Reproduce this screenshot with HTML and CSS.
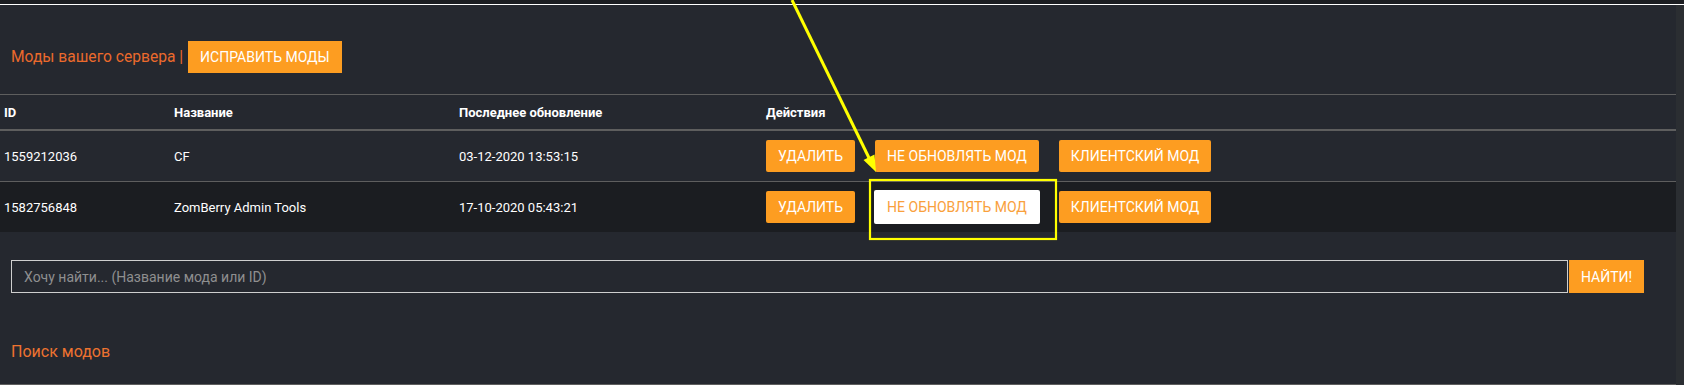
FILE: index.html
```html
<!DOCTYPE html>
<html lang="ru">
<head>
<meta charset="utf-8">
<title>Моды сервера</title>
<link rel="stylesheet" href="styles.css">
</head>
<body>
<div class="topbar"></div>
<div class="layout">
  <main class="main">
    <div class="title-row">
      <h2 class="title">Моды вашего сервера |</h2>
      <button class="btn btn-square">Исправить моды</button>
    </div>

    <div class="table">
      <div class="row head">
        <div>ID</div>
        <div>Название</div>
        <div>Последнее обновление</div>
        <div>Действия</div>
      </div>
      <div class="row">
        <div>1559212036</div>
        <div>CF</div>
        <div>03-12-2020 13:53:15</div>
        <div class="actions">
          <button class="btn">Удалить</button>
          <button class="btn">Не обновлять мод</button>
          <button class="btn">Клиентский мод</button>
        </div>
      </div>
      <div class="row dark">
        <div>1582756848</div>
        <div>ZomBerry Admin Tools</div>
        <div>17-10-2020 05:43:21</div>
        <div class="actions">
          <button class="btn">Удалить</button>
          <button class="btn btn-white">Не обновлять мод</button>
          <button class="btn">Клиентский мод</button>
        </div>
      </div>
    </div>

    <div class="search">
      <input class="search-input" type="text" placeholder="Хочу найти... (Название мода или ID)">
      <button class="btn btn-square">Найти!</button>
    </div>

    <h2 class="title section">Поиск модов</h2>
  </main>
  <div class="gutter"></div>
</div>

<svg class="annot" width="1684" height="385" viewBox="0 0 1684 385">
  <line x1="792" y1="0" x2="871" y2="162" stroke="#ffff00" stroke-width="3"/>
  <polygon points="876,172 874.5,154.5 863.5,160" fill="#ffff00"/>
  <rect x="870" y="180" width="186" height="59" fill="none" stroke="#ffff00" stroke-width="2.2"/>
</svg>
</body>
</html>
```

FILE: styles.css
```css
* { box-sizing: border-box; }

html, body {
  margin: 0;
  padding: 0;
  background: #25282f;
  font-family: Roboto, "Noto Sans", "Liberation Sans", sans-serif;
  height: 385px;
  overflow: hidden;
}

.topbar {
  height: 5px;
  background: #1b1d21;
  border-bottom: 1px solid #ffffff;
}

.layout {
  display: flex;
  height: 380px;
}

.main {
  width: 1676px;
  padding-top: 36px;
  border-bottom: 1px solid #5e5e5e;
}

.gutter {
  flex: 1;
  background: #2b2e32;
}

.title-row {
  display: flex;
  align-items: center;
  gap: 5px;
  padding-left: 11px;
  height: 32px;
}

.title {
  margin: 0;
  font-weight: 400;
  font-size: 15.6px;
  color: #ec6a2c;
}

.btn {
  font-family: Roboto, "Noto Sans", "Liberation Sans", sans-serif;
  background: #fd9d21;
  color: #ffffff;
  border: 0;
  border-radius: 2px;
  text-transform: uppercase;
  font-size: 14px;
  height: 32px;
  padding: 0 12px;
  white-space: nowrap;
  cursor: pointer;
}

.btn-square {
  border-radius: 0;
}

.title-row .btn {
  font-size: 14px;
  padding: 0 12px;
}

.table {
  margin-top: 21px;
  border-top: 1px solid #5e5e5e;
}

.row {
  display: grid;
  grid-template-columns: 170px 285px 307px 1fr;
  align-items: center;
  padding-left: 4px;
  height: 51px;
  border-bottom: 1px solid #5e5e5e;
  color: #ffffff;
  font-size: 13px;
  font-weight: 400;
}

.row.head {
  height: 36px;
  font-weight: 700;
  border-bottom: 2px solid #5e5e5e;
}

.row.dark {
  background: #1b1d21;
  border-bottom: 0;
  height: 50px;
}

.actions {
  display: flex;
  gap: 20px;
  align-items: center;
}

.btn-white {
  background: #ffffff;
  color: #f9a03c;
  height: 34px;
  margin: 0 -1px;
  padding: 0 13px;
}

.search {
  display: flex;
  gap: 1px;
  margin: 28px 32px 0 11px;
  height: 33px;
}

.search-input {
  flex: 1;
  height: 33px;
  background: transparent;
  border: 1px solid #cfcfcf;
  padding: 0 12px;
  font-family: Roboto, "Noto Sans", "Liberation Sans", sans-serif;
  font-size: 14px;
  color: #ffffff;
  outline: none;
}

.search-input::placeholder {
  color: #8f8f8f;
}

.search .btn {
  height: 33px;
  width: 75px;
  padding: 0;
}

.section {
  margin-top: 49px;
  padding-left: 11px;
  font-size: 16px;
  color: #ee7330;
}

.annot {
  position: absolute;
  left: 0;
  top: 0;
  pointer-events: none;
}
```
